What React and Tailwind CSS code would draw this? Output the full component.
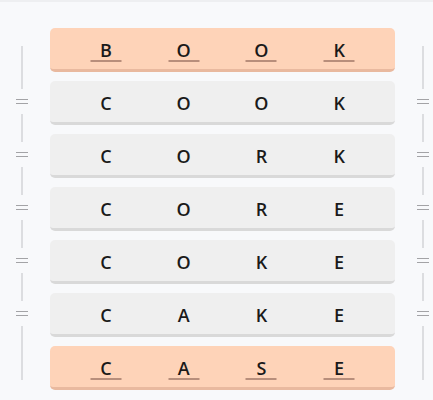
import React from 'react';

const rows = [
  { letters: ['B', 'O', 'O', 'K'], end: true },
  { letters: ['C', 'O', 'O', 'K'] },
  { letters: ['C', 'O', 'R', 'K'] },
  { letters: ['C', 'O', 'R', 'E'] },
  { letters: ['C', 'O', 'K', 'E'] },
  { letters: ['C', 'A', 'K', 'E'] },
  { letters: ['C', 'A', 'S', 'E'], end: true },
];

const EqualMark = () => (
  <span className="block w-[12px] h-[5px] border-y-[1.5px] border-[#a3a3a6]" />
);

// Left / right ladder rail: a thin line with "=" marks at the middle rows
const Rail = () => (
  <div className="relative w-[44px] shrink-0">
    <div className="absolute left-[21px] top-[18px] bottom-[10px] w-[2px] bg-[#dcdde0]" />
    <div className="relative flex flex-col gap-[9px]">
      {rows.map((row, i) => (
        <div key={i} className="h-[44px] flex items-center justify-center">
          {i > 0 && i < rows.length - 1 && (
            <span className="bg-[#f8f9fb] py-[10px] px-[2px] -mt-[3px]">
              <EqualMark />
            </span>
          )}
        </div>
      ))}
    </div>
  </div>
);

const WordRow = ({ letters, end }) => (
  <div
    className={
      'h-[44px] rounded-[5px] border-b-[3px] grid grid-cols-4 px-[17px] ' +
      (end ? 'bg-[#fed3b8] border-[#e9b99f]' : 'bg-[#efefef] border-[#d9d9d9]')
    }
  >
    {letters.map((ch, i) => (
      <div key={i} className="relative flex items-center justify-center">
        <span className="text-[18px] leading-[24px] font-semibold text-[#1a1a1a] translate-y-[1px]">{ch}</span>
        {end && (
          <span className="absolute left-1/2 -translate-x-1/2 top-[32px] w-[31px] h-[2px] bg-[#b88e7b]" />
        )}
      </div>
    ))}
  </div>
);

const App = () => {
  return (
    <div
      className="w-full min-h-[400px] overflow-hidden bg-[#f8f9fb] border-t-2 border-[#eeeff1]"
      style={{ fontFamily: '"Open Sans", "Noto Sans", sans-serif' }}
    >
      <div className="w-[445px] flex pt-[26px] gap-[6px]">
        <Rail />
        <div className="w-[345px] shrink-0 flex flex-col gap-[9px]">
          {rows.map((row, i) => (
            <WordRow key={i} letters={row.letters} end={row.end} />
          ))}
        </div>
        <Rail />
      </div>
    </div>
  );
};

export default App;
